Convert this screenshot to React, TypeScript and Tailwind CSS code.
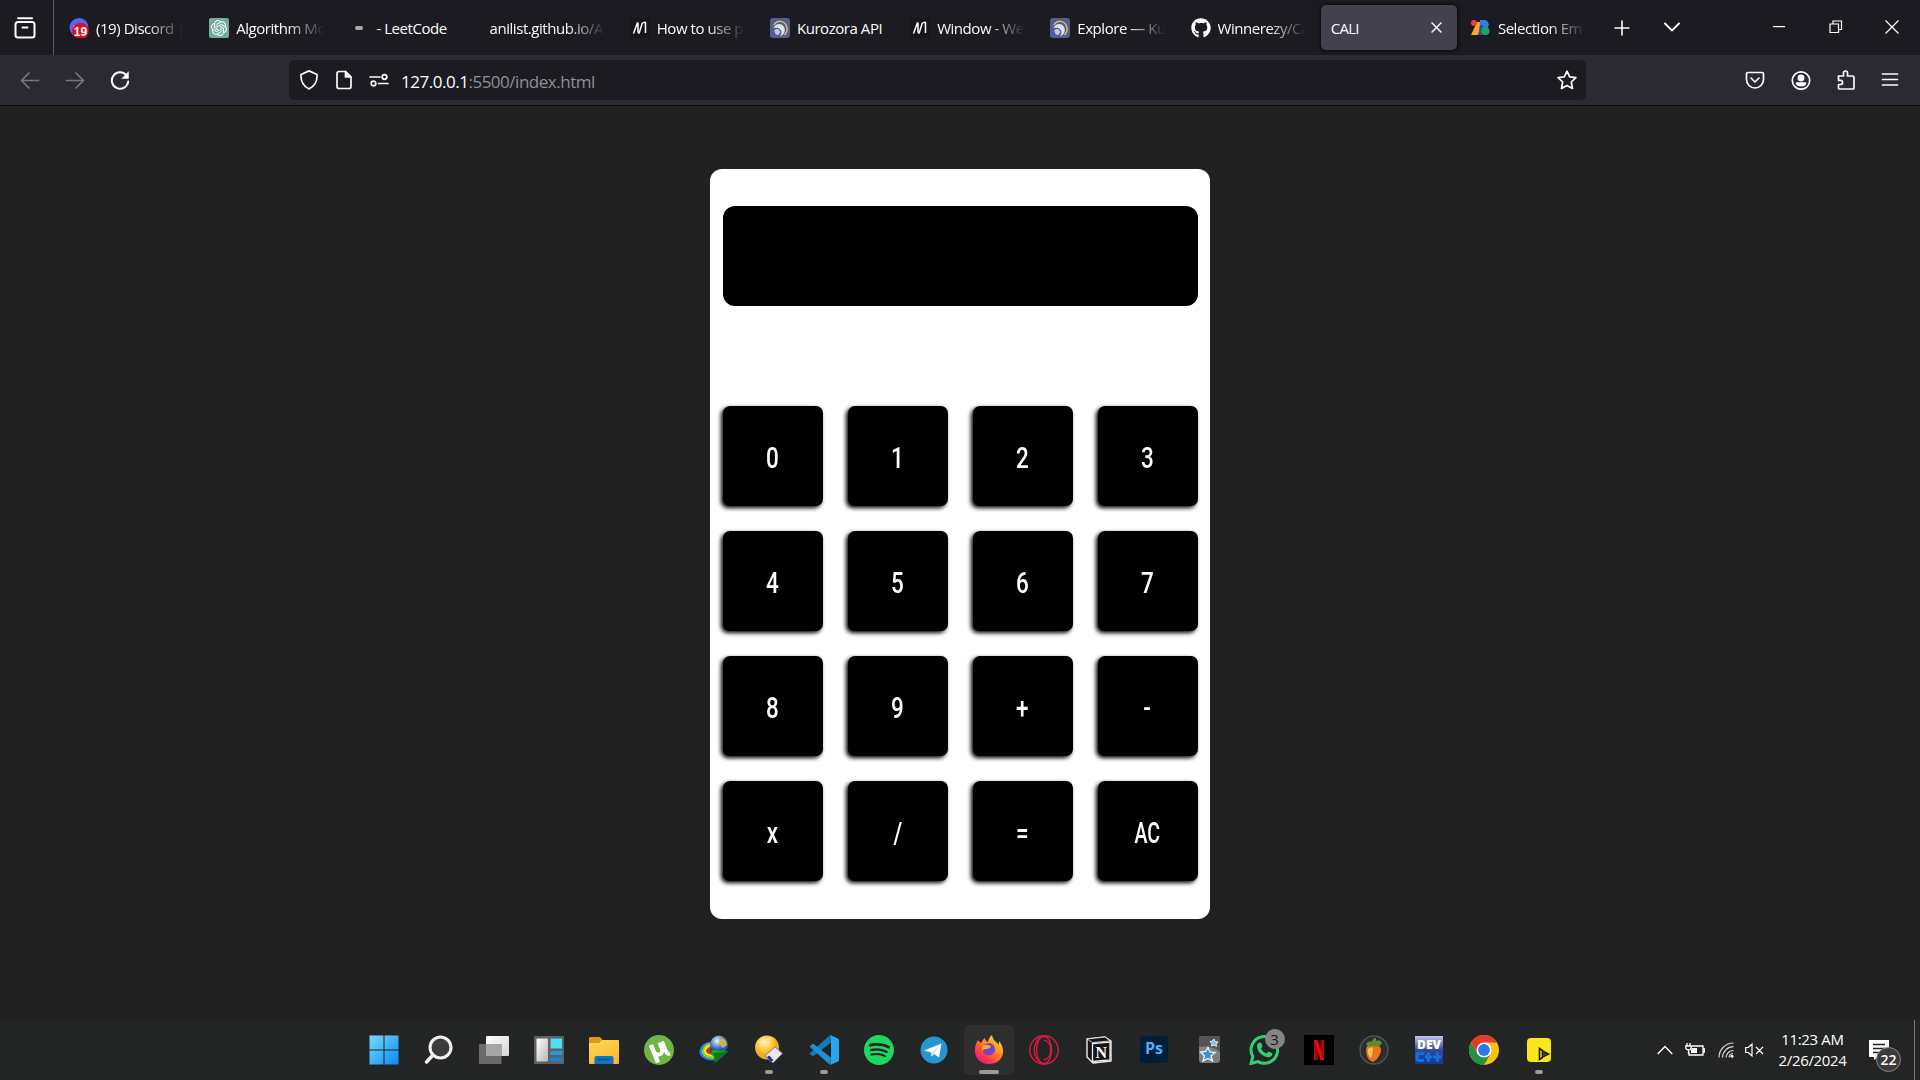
import type { ReactNode } from "react";
import { FaGithub } from "react-icons/fa";
import { SiOpenai, SiSpotify } from "react-icons/si";

const UI = "font-['Open_Sans','Noto_Sans',sans-serif]";

function Mdn() {
  return (
    <svg viewBox="0 0 20 20" className="size-5">
      <rect width="20" height="20" fill="#17161b" />
      <path d="M3.500 15.500 7.500 4.500M9 15.500 12.500 4.500M8 4.500v9.500l1 1.500M13 4.500h2.500V15" stroke="#fff" strokeWidth="1.500" fill="none" />
    </svg>
  );
}

function Kurozora() {
  return (
    <svg viewBox="0 0 20 20" className="size-5">
      <rect width="20" height="20" rx="3" fill="#525d92" />
      <path d="M4 7C7 2 14 2 16.500 8c1.500 4 0 7-2 9" stroke="#e6c04f" strokeWidth="1.500" fill="none" />
      <path d="M3.500 10C6 4.500 12 5 14 9c2 4 0 8-4 9 2-3 2-5 0-7-2-1.500-4-1.500-6.500-1Z" fill="#dfe2f2" />
      <path d="M4.500 12c2.500-2 5-1 5.500 1.500 0 2-1.500 3.500-3 3.500-2-1-2.500-3-2.500-5Z" fill="#c3c9e4" />
    </svg>
  );
}

const tabs: { title: string; icon?: ReactNode; active?: boolean; fade?: boolean }[] = [
  {
    title: "(19) Discord |",
    fade: true,
    icon: (
      <svg viewBox="0 0 20 20" className="size-5">
        <circle cx="10" cy="9.500" r="9.500" fill="#5865f2" />
        <path d="M4.500 8q5.500-4 11 0v3h-11Z" fill="#fff" />
        <circle cx="11.500" cy="13" r="8.300" fill="#d8121f" />
        <text x="11.500" y="17.500" fontSize="12" fontWeight="700" textAnchor="middle" fill="#fff" fontFamily="Liberation Sans, sans-serif">19</text>
      </svg>
    ),
  },
  {
    title: "Algorithm Mo",
    fade: true,
    icon: (
      <span className="flex size-5 items-center justify-center rounded-[2px] bg-[#74aa9c]">
        <SiOpenai className="size-4 text-white" />
      </span>
    ),
  },
  {
    title: "- LeetCode",
    icon: (
      <span className="flex size-5 items-center justify-center">
        <span className="h-1 w-2 rounded-full bg-[#a9a9ad]" />
      </span>
    ),
  },
  { title: "anilist.github.io/Ap", fade: true },
  { title: "How to use pr", fade: true, icon: <Mdn /> },
  { title: "Kurozora API", icon: <Kurozora /> },
  { title: "Window - Web", fade: true, icon: <Mdn /> },
  { title: "Explore — Kur", fade: true, icon: <Kurozora /> },
  { title: "Winnerezy/Ca", fade: true, icon: <FaGithub className="size-5 text-white" /> },
  { title: "CALI", active: true },
  {
    title: "Selection Em",
    fade: true,
    icon: (
      <svg viewBox="0 0 20 20" className="size-5">
        <path d="M6 4h5L7 17H0Z" fill="#fbab18" />
        <circle cx="3" cy="5" r="3" fill="#ea4335" />
        <path d="M9 2h4a4.500 4.500 0 0 1 4 7l-4 8H8Z" fill="#2d7fe8" />
        <path d="M9 7h3l1 10H8Z" fill="#1b52af" />
        <circle cx="14.500" cy="13" r="4" fill="#22a455" />
      </svg>
    ),
  },
];

function TabBar() {
  return (
    <div className="flex h-[55px] shrink-0 bg-[#1c1b22]">
      <div className="flex w-[54px] shrink-0 items-center border-r border-[#5b5b62] pl-[14px]">
        <svg viewBox="0 0 22 22" className="size-[22px]" fill="none" stroke="#fbfbfe" strokeWidth="2" strokeLinecap="round" strokeLinejoin="round">
          <path d="M4 1.200h14" />
          <rect x="1.500" y="5" width="19" height="15.500" rx="2.500" />
          <path d="M8.500 10.500h5" />
        </svg>
      </div>
      <div className="flex pt-[5px] pl-[3px]">
        {tabs.map((t) => (
          <div key={t.title} className="w-[140.200px] shrink-0 px-[2px]">
            <div className={`flex h-[45px] items-center rounded-[5px] pl-[10px] ${t.active ? "bg-[#42414d] shadow-[0_0_4px_#000]" : ""}`}>
              {t.icon && <span className="mr-[7px] shrink-0">{t.icon}</span>}
              <span
                className={`min-w-0 flex-1 overflow-hidden whitespace-nowrap pt-px text-[15px] text-[#fbfbfe] ${t.active ? "tracking-[-0.700px]" : "tracking-[-0.450px]"} ${t.fade ? "mr-[11px] [mask-image:linear-gradient(to_left,transparent_0,#000_38px)]" : ""}`}
              >
                {t.title}
              </span>
              {t.active && (
                <svg viewBox="0 0 10 10" className="mr-[15px] size-[11px]" stroke="#fbfbfe" strokeWidth="1.300">
                  <path d="M.5.5l9 9M9.500.5l-9 9" />
                </svg>
              )}
            </div>
          </div>
        ))}
      </div>
      <svg viewBox="0 0 16 16" className="mt-5 ml-[15px] size-4" stroke="#fbfbfe" strokeWidth="1.600">
        <path d="M8 .5v15M.5 8h15" />
      </svg>
      <svg viewBox="0 0 16 16" className="mt-[19px] ml-[34px] size-4" fill="none" stroke="#fbfbfe" strokeWidth="1.800" strokeLinecap="round" strokeLinejoin="round">
        <path d="M1 4.500l7 7 7-7" />
      </svg>
      <svg viewBox="0 0 14 14" className="mt-5 ml-auto size-[14px]" stroke="#fff" strokeWidth="1.200">
        <path d="M1 6.600h12" />
      </svg>
      <svg viewBox="0 0 14 14" className="mt-5 ml-[43px] size-[14px]" fill="none" stroke="#fff" strokeWidth="1.200">
        <path d="M1 4h8.500v8.500H1zM4 4V1h8.500v8.500h-3" />
      </svg>
      <svg viewBox="0 0 14 14" className="mt-5 mr-[21px] ml-[42px] size-[14px]" stroke="#fff" strokeWidth="1.200">
        <path d="M.5.5l13 13M13.500.5l-13 13" />
      </svg>
    </div>
  );
}

function Line({ children, className }: { children: ReactNode; className: string }) {
  return (
    <svg viewBox="0 0 20 20" className={`size-5 shrink-0 ${className}`} fill="none" stroke="currentColor" strokeWidth="1.700" strokeLinecap="round" strokeLinejoin="round">
      {children}
    </svg>
  );
}

function Toolbar() {
  return (
    <div className="flex h-[51px] shrink-0 items-center border-b border-[#0c0c0d] bg-[#2b2a33] text-[#fbfbfe]">
      <Line className="ml-5 text-[#77767d]"><path d="M18.500 10.500H1.500M9 3 1.500 10.500 9 18" /></Line>
      <Line className="ml-[25px] text-[#77767d]"><path d="M1.500 10.500h17M11 3l7.500 7.500L11 18" /></Line>
      <Line className="ml-[25px]">
        <path d="M16.500 5.500A8.200 8.200 0 1 0 18.200 11.500" strokeWidth="2" />
        <path d="M18.500 2v6.500H12Z" fill="currentColor" strokeWidth="0.500" />
      </Line>
      <div className="ml-[159px] flex h-10 w-[1297px] items-center rounded-[5px] bg-[#1c1b22]">
        <Line className="ml-[10px]"><path d="M10 .900 18 4.500c.5 6.500-2 11.500-8 14.600C4 16 1.500 11 2 4.500Z" /></Line>
        <Line className="ml-[15px]">
          <path d="M5 1.500h6.500L17 7v9.500a2 2 0 0 1-2 2H5a2 2 0 0 1-2-2v-13a2 2 0 0 1 2-2Z" />
          <path d="M11.500 1.500V7H17Z" fill="currentColor" />
        </Line>
        <Line className="ml-[15px]">
          <path d="M1 7h10M9.500 13.500H19" />
          <circle cx="15.500" cy="7" r="2.300" />
          <circle cx="4.500" cy="13.500" r="2.300" />
        </Line>
        <span className="ml-[12px] pt-[3px] whitespace-nowrap text-[17px] tracking-[-0.480px]">
          127.0.0.1<span className="text-[#8f8e96]">:5500/index.html</span>
        </span>
        <Line className="mr-[9px] ml-auto"><path d="m10 1.200 2.700 5.700 6.200.8-4.600 4.300 1.200 6.500L10 15.400l-5.500 3.100L5.700 12 1.100 7.700l6.200-.8Z" /></Line>
      </div>
      <Line className="ml-[159px]"><path d="M3 2.500h14a1.500 1.500 0 0 1 1.500 1.500v5.500a8.500 8.500 0 0 1-17 0V4A1.500 1.500 0 0 1 3 2.500ZM6 8l4 4 4-4" /></Line>
      <Line className="ml-[26px]">
        <circle cx="10" cy="10.500" r="8.700" />
        <circle cx="10" cy="8" r="2.600" fill="currentColor" />
        <path d="M5.500 13h9c-1 3.500-8 3.500-9 0Z" fill="currentColor" />
      </Line>
      <Line className="ml-[25px]">
        <path d="M2.500 6h5V3a2 2 0 0 1 4 0v3h5A1.500 1.500 0 0 1 18 7.500V18a1 1 0 0 1-1 1H3.500a1 1 0 0 1-1-1v-3.500h2a2 2 0 0 0 0-4.200h-2Z" />
      </Line>
      <Line className="ml-[24px]"><path d="M2.500 4h15M2.500 9.500h15M2.500 15h15" /></Line>
    </div>
  );
}

const keys = ["0", "1", "2", "3", "4", "5", "6", "7", "8", "9", "+", "-", "x", "/", "=", "AC"];

function Calculator() {
  return (
    <div className="mt-[63px] h-[750px] w-[500px] rounded-[12px] bg-white px-[12.500px] pt-[37px]">
      <div className="h-[100px] rounded-[12px] bg-black" />
      <div className="mt-[100px] grid grid-cols-4 gap-[25px]">
        {keys.map((k) => (
          <button key={k} className="flex size-[100px] items-center justify-center rounded-[7px] bg-black pt-[5px] font-['Roboto',sans-serif] text-[29.500px] text-white shadow-[-2px_2px_4px_#000]">
            <span className={`font-medium ${k === "AC" ? "scale-x-[0.660]" : "scale-x-[0.760]"}`}>{k}</span>
          </button>
        ))}
      </div>
    </div>
  );
}

const apps: { name: string; art: ReactNode; run?: boolean; active?: boolean; badge?: string }[] = [
  {
    name: "start",
    art: (
      <>
        <linearGradient id="win" x2="1" y2="1"><stop stopColor="#74dcff" /><stop offset="1" stopColor="#0a87f5" /></linearGradient>
        <path d="M.5.5h14v14H.5zM15.500.5h14v14h-14zM.5 15.500h14v14H.5zM15.500 15.500h14v14h-14z" fill="url(#win)" />
      </>
    ),
  },
  {
    name: "search",
    art: (
      <>
        <circle cx="16.500" cy="12.500" r="10.500" fill="#3b3b3b" stroke="#f2f2f2" strokeWidth="3" />
        <path d="m9 20-6.500 7" stroke="#f2f2f2" strokeWidth="3.500" strokeLinecap="round" />
      </>
    ),
  },
  {
    name: "taskview",
    art: (
      <>
        <linearGradient id="tv" x2="1" y2="1"><stop stopColor="#fff" /><stop offset="1" stopColor="#d5d5d5" /></linearGradient>
        <rect x="7" y="1" width="23" height="20" rx="1" fill="url(#tv)" />
        <rect x="0" y="9" width="22.500" height="20" rx="1" fill="#6b6b6b" />
        <rect x="7" y="9" width="15.500" height="12" fill="#a6a6a6" />
      </>
    ),
  },
  {
    name: "widgets",
    art: (
      <>
        <linearGradient id="wg" x2="1" y2="1"><stop stopColor="#fff" /><stop offset="1" stopColor="#b5b5b5" /></linearGradient>
        <rect y="1" width="30" height="28" rx="1" fill="#5c6164" />
        <rect x="2.500" y="3.500" width="11.500" height="23" rx="1" fill="url(#wg)" />
        <rect x="16.500" y="3.500" width="11.500" height="10" fill="#4fdcf5" />
        <rect x="16.500" y="16" width="11.500" height="4" fill="#2a9ad8" />
        <rect x="16.500" y="22.500" width="11.500" height="4" fill="#1686d4" />
      </>
    ),
  },
  {
    name: "explorer",
    art: (
      <>
        <linearGradient id="fe" x2="0.500" y2="1"><stop stopColor="#ffd95c" /><stop offset="1" stopColor="#fbb92d" /></linearGradient>
        <path d="M0 3q0-1 1-1h10l3 3.500L11 9H0Z" fill="#dc9a12" />
        <path d="M0 8h10l3-3h16q1 0 1 1v22q0 1-1 1H1q-1 0-1-1Z" fill="url(#fe)" />
        <path d="M5.500 29v-6q0-2 2-2h15q2 0 2 2v6Z" fill="#1173c0" />
        <path d="M8.500 24.500h13" stroke="#084d8a" strokeWidth="1.300" />
      </>
    ),
  },
  {
    name: "torrent",
    art: (
      <>
        <circle cx="15" cy="15" r="15" fill="#6fb445" />
        <path d="M7 10 14 27.500" stroke="#fff" strokeWidth="4.500" />
        <path d="M7 10q3 10 8 9.500 5-1 2-7.500l-1.500-4.500M18 6.500l4 10q1.500 3 4 2" fill="none" stroke="#fff" strokeWidth="3.800" />
      </>
    ),
  },
  {
    name: "downloader",
    art: (
      <>
        <radialGradient id="gl" cx=".4" cy=".3"><stop stopColor="#f2f6fb" /><stop offset=".5" stopColor="#7ea3d8" /><stop offset="1" stopColor="#2a58a8" /></radialGradient>
        <g fill="none" strokeWidth="2.400">
          <path d="M13 8C3 8-2 17 5 22q4 3 10 2" stroke="#2d7cf0" />
          <path d="M14 9C5 9 1 17 7 21q4 2 8 1.500" stroke="#8ed32c" />
          <path d="M14 10.500C7 10.500 4 16 8 19q3 2 7 1.500" stroke="#f8e52b" />
          <path d="M15 12c-6 0-7 4-4 6 2 1 3 1 4 1" stroke="#ec2f24" />
        </g>
        <circle cx="20" cy="9.500" r="9" fill="url(#gl)" />
        <path d="M20 4q4-2 7 2l1 4-4 3-3-3Z" fill="#c9b34f" />
        <path d="m11 15 18 1.500L16 28l-1-6-4-3 3-1Z" fill="#12b61e" />
        <path d="m14 18 15-1.500L16 28l-.5-6Z" fill="#087a13" />
      </>
    ),
  },
  {
    name: "database",
    run: true,
    art: (
      <>
        <radialGradient id="nv" cx=".4" cy=".3"><stop stopColor="#fff3c4" /><stop offset=".5" stopColor="#ffd24d" /><stop offset="1" stopColor="#f1a91e" /></radialGradient>
        <circle cx="13" cy="12.500" r="12" fill="url(#nv)" />
        <path d="M5 8q6-5 13-4M6 11q5-4 10-4" stroke="#fff1b8" strokeWidth="1.200" fill="none" />
        <path d="m11 21 10-9 7.500 6.500L19 28Z" fill="#e8e6f5" stroke="#6f6c90" strokeWidth=".8" />
        <path d="m15.500 20.500 4 5-2.500 1-4-4.500Z" fill="#2d2b91" />
      </>
    ),
  },
  {
    name: "vscode",
    run: true,
    art: (
      <>
        <path d="M22 7.500 4 21.500l-3.500-3 20-18Z" fill="#1478bd" />
        <path d="M22 22.500 4 8.500l-3.500 3 20 18Z" fill="#1f8ed6" />
        <path d="M21 0l8 3.500q1 .5 1 1.500v20q0 1-1 1.500L21 30l1-7V7Z" fill="#2aa4ef" />
      </>
    ),
  },
  { name: "spotify", art: <SiSpotify size={30} color="#1ed760" /> },
  {
    name: "telegram",
    art: (
      <>
        <circle cx="15" cy="15" r="13.500" fill="#2397d1" />
        <path d="M5 15.500 22.500 8.500 20 22.500l-5-3.500-2.500 2.500-.5-4Z" fill="#fff" />
        <path d="m12 17.500 8-6-5.500 7-2 3Z" fill="#c4deee" />
      </>
    ),
  },
  {
    name: "firefox",
    active: true,
    art: (
      <>
        <linearGradient id="ff" x1="1" y1="0" x2=".2" y2="1"><stop stopColor="#fff44f" /><stop offset=".4" stopColor="#ff9a1f" /><stop offset=".75" stopColor="#ff3c47" /><stop offset="1" stopColor="#e31587" /></linearGradient>
        <path d="M4 5q1 2 3 3 2-4 4-5 0 3 3 4 1-5 4-7 1 5 4 7 2 1 3 3V6c8 9 4 23-10 23C2 29-3 16 4 5Z" fill="url(#ff)" />
        <path d="M10 12q0-3 5-4 6 1 6 7c0 4-5 6-9 5-4-2-3-5-1-6l4-1Z" fill="#7540cb" />
        <path d="M8 11q5-2 9 0-1 3-5 3-4 0-4 3Z" fill="#ffac24" />
      </>
    ),
  },
  {
    name: "opera",
    art: (
      <g fill="none" stroke="#d91b45" strokeWidth="1.400">
        <circle cx="15" cy="15" r="14.200" />
        <ellipse cx="15" cy="15" rx="7.500" ry="13.500" />
        <path d="M12 2C3 8 3 22 12 28M15 5c9 2 9 18 0 20" />
      </g>
    ),
  },
  {
    name: "notion",
    art: (
      <>
        <path d="m3 4 18-2 6 4v20l-18 2-6-6Z" fill="#161616" stroke="#eee" strokeWidth="1.400" strokeLinejoin="round" />
        <path d="m3 4 18-2 5 4L8.500 7.500Z" fill="#161616" stroke="#eee" strokeWidth=".8" />
        <path d="M8.500 8.500 26 7.200V25L8.500 26.500Z" fill="#161616" stroke="#eee" strokeWidth="1.300" />
        <text x="17.300" y="22.500" fontSize="16" fontWeight="700" textAnchor="middle" fill="#fff" fontFamily="Liberation Serif, serif">N</text>
      </>
    ),
  },
  {
    name: "photoshop",
    art: (
      <>
        <rect x="1" y="1" width="28" height="27" rx="4" fill="#001e36" />
        <text x="15" y="18.500" fontSize="15.500" fontWeight="700" textAnchor="middle" fill="#4bb0ff" fontFamily="Open Sans, sans-serif" textLength="18" lengthAdjust="spacingAndGlyphs">Ps</text>
      </>
    ),
  },
  {
    name: "anki",
    art: (
      <>
        <linearGradient id="ak" x2="0" y2="1"><stop stopColor="#8d8d8d" /><stop offset="1" stopColor="#777" /></linearGradient>
        <rect x="5" y="1" width="21" height="27" rx="3" fill="url(#ak)" />
        <path d="M5 12q12-2 21 5V4q0-3-3-3H8Q5 1 5 4Z" fill="#555" />
        <path d="m14 12.500 2 4.500 5 .5-4 3.500 1.500 5-4.500-2.500-5 2.500 1.500-5-4-4 5-.5Z" fill="#3793d8" stroke="#eef8ff" strokeWidth="1.300" />
        <path d="m20 4 1 2.500 3 .5-2 2 .5 2.500L20 10l-2.500 1 .5-2.500-2-2 2.500-.5Z" fill="#7cbdea" stroke="#eef8ff" strokeWidth=".9" />
      </>
    ),
  },
  {
    name: "whatsapp",
    badge: "3",
    art: (
      <>
        <path d="M2 28.500 3.800 21.500A13.300 13.300 0 1 1 9 26.600Z" fill="none" stroke="#2fd071" strokeWidth="3" />
        <path d="M9.500 8q2-1 3 .5l1 3-1.500 2q2 4 5.500 5l2-2 3.500 1.500q1 1-.5 3-2 2-5 1C12 20 8 16 8 11q0-2 1.500-3Z" fill="#2fd071" />
      </>
    ),
  },
  {
    name: "netflix",
    art: (
      <>
        <rect width="30" height="30" fill="#000" />
        <path d="M10 5h3.500v20L10 25.300zM16.500 5H20v20.300l-3.500-.3z" fill="#b1060f" />
        <path d="M10 5h3.500L20 25.300l-3.500-.3Z" fill="#e50914" />
      </>
    ),
  },
  {
    name: "flstudio",
    art: (
      <>
        <circle cx="15" cy="15" r="14" fill="#2b2e31" stroke="#4d5155" strokeWidth="1.500" />
        <path d="M7 14q1-5 8-4 8 0 7 6-2 8-8 11-7-2-7-13Z" fill="#f4711c" />
        <path d="M9 14q3-3 5-1 0 6-2 10-4-4-3-9Z" fill="#ffc35c" />
        <path d="M15 11q-6 2-8-2 3-4 6-2 0-4 4-4l0 3q4-2 6 2-2 4-5 3-1 2-3 0Z" fill="#5d9127" />
      </>
    ),
  },
  {
    name: "devcpp",
    art: (
      <>
        <linearGradient id="dv" x2="0" y2="1"><stop stopColor="#c4c4ec" /><stop offset=".5" stopColor="#3446a0" /><stop offset="1" stopColor="#0d3a94" /></linearGradient>
        <rect x="1" y="1" width="28" height="28" fill="url(#dv)" />
        <text x="15" y="13.500" fontSize="12.500" fontWeight="800" textAnchor="middle" fill="#fff" fontFamily="Open Sans, sans-serif" textLength="24" lengthAdjust="spacingAndGlyphs">DEV</text>
        <path d="M10 18.500H5q-2 0-2 2v3q0 2 2 2h5M11 22h7M14.500 17.500v9M19 22h8M23.500 17.500v9" stroke="#1273dc" strokeWidth="3" fill="none" />
      </>
    ),
  },
  {
    name: "chrome",
    art: (
      <>
        <circle cx="15" cy="15" r="15" fill="#fbc116" />
        <path d="M2 7.500A15 15 0 0 1 28 7.500H15L8.500 18.800Z" fill="#e33b2e" />
        <path d="M2 7.500A15 15 0 0 0 15 30l6.500-11.200-6.500 3-6.500-3Z" fill="#229342" />
        <circle cx="15" cy="15" r="7.500" fill="#fff" />
        <circle cx="15" cy="15" r="5.900" fill="#3078ea" />
      </>
    ),
  },
  {
    name: "player",
    run: true,
    art: (
      <>
        <rect x="3" y="3" width="24" height="24" rx="4" fill="#fbe51c" />
        <path d="M15.500 13.500v11l3-2v-7ZM18.500 16l6 3-6 3" fill="none" stroke="#17160b" strokeWidth="1.600" />
        <path d="M19 19h3" stroke="#17160b" strokeWidth="1.500" />
      </>
    ),
  },
];

function Taskbar() {
  return (
    <div className="flex h-[60px] shrink-0 bg-[#232424] text-white">
      <div className="ml-[356px] flex">
        {apps.map((a) => (
          <div key={a.name} className="flex w-[55px] justify-center pt-[5px]">
            <div className={`relative flex h-[50px] w-[50px] flex-col items-center rounded-[5px] pt-[10px] ${a.active ? "bg-[#2e2e2e]" : ""}`}>
              <svg viewBox="0 0 30 30" className="size-[30px]">{a.art}</svg>
              {a.run && <span className="mt-[5px] h-1 w-2 rounded-full bg-[#9a9a9a]" />}
              {a.active && <span className="mt-[5px] h-1 w-5 rounded-full bg-[#9a9a9a]" />}
              {a.badge && (
                <span className="absolute top-[4px] right-[4px] flex size-5 items-center justify-center rounded-full bg-[#858585] text-[15px] text-[#181818]">{a.badge}</span>
              )}
            </div>
          </div>
        ))}
      </div>
      <div className="ml-auto flex items-center">
        <svg viewBox="0 0 16 10" className="h-[10px] w-4" fill="none" stroke="#fff" strokeWidth="1.400"><path d="m.7 9 7.300-7.500L15.300 9" /></svg>
        <svg viewBox="0 0 20 16" className="ml-3 h-4 w-5" fill="none" stroke="#fff" strokeWidth="1.300">
          <path d="M7 4h11v9H4v-3M18 7h1.500v3H18M2 1v3M5 1v3M.8 4h5.400v2q-.5 2-2.700 2T.8 6ZM3.500 8v4" />
          <path d="M7 6h5v5H6V8Z" fill="#fff" stroke="none" />
        </svg>
        <svg viewBox="0 0 16 16" className="ml-[13px] h-4 w-4" fill="none" stroke="#d5d5d5" strokeWidth="1.200">
          <path d="M1 15.500A14.500 14.500 0 0 1 15.500 1M4.500 15.500A11 11 0 0 1 15.500 4.700M8 15.500a7.500 7.500 0 0 1 7.500-7M11 15.500a4.500 4.500 0 0 1 4-4" />
          <circle cx="14" cy="14.300" r="1.500" fill="#fff" stroke="none" />
        </svg>
        <svg viewBox="0 0 19 16" className="ml-[11px] h-4 w-[19px]" fill="none" stroke="#fff" strokeWidth="1.200">
          <path d="M.7 5.500h2.500L7 2v12l-3.800-3.500H.7ZM11 5l7 7M18 5l-7 7" />
        </svg>
        <div className="ml-[12px] w-[73px] text-center text-[15px] leading-[21px] tracking-[-0.350px] whitespace-nowrap">
          <div>11:23 AM</div>
          <div>2/26/2024</div>
        </div>
        <div className="relative ml-5 h-5 w-[45px]">
          <svg viewBox="0 0 20 20" className="size-5"><path d="M0 0h20v17H9l-4 3v-3H0Z" fill="#fff" /><path d="M4 4.500h12M4 8.500h12M4 12.500h7" stroke="#222" strokeWidth="1.300" /></svg>
          <span className="absolute top-[7px] left-[7px] flex size-[25px] items-center justify-center rounded-full border border-[#888] bg-[#3b3b3b] text-[14px] font-semibold">22</span>
        </div>
        <div className="mr-[5px] h-[60px] w-px bg-[#777]" />
      </div>
    </div>
  );
}

export default function App() {
  return (
    <div className={`flex h-[1080px] w-[1920px] flex-col overflow-hidden bg-[#212121] ${UI}`}>
      <TabBar />
      <Toolbar />
      <main className="flex flex-1 justify-center">
        <Calculator />
      </main>
      <Taskbar />
    </div>
  );
}
